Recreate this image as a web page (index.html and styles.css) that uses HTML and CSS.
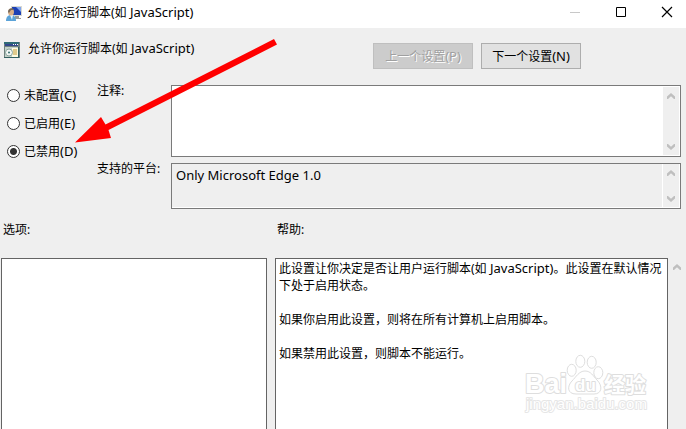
FILE: index.html
```html
<!DOCTYPE html>
<html lang="zh-CN">
<head>
<meta charset="utf-8">
<title>允许你运行脚本(如 JavaScript)</title>
<link rel="stylesheet" href="styles.css">
</head>
<body>
<svg class="symbols" aria-hidden="true">
  <symbol id="chevron-up" viewBox="0 0 8 6"><path d="M0 3.500 4 0 8 3.500V6H7L4 3.200 1 6H0z"/></symbol>
  <symbol id="chevron-down" viewBox="0 0 8 6"><path d="M0 0H1L4 2.800 7 0H8V2.500L4 6 0 2.500z"/></symbol>
</svg>
<div class="window">
  <header class="titlebar">
    <svg class="app-icon" viewBox="0 0 16 16" aria-hidden="true">
      <path d="M5 0h11v10H6z" fill="#d9d9d2"/>
      <path d="M6 1h9v8H6z" fill="#1c3fb4"/>
      <path d="M10 1h5v5z" fill="#7fa4ee"/>
      <path d="M9 10h4v2h2v1H8v-1h1z" fill="#9a9c98"/>
      <path d="M0 15c0-4 2-6 5-6s5 2 5 6z" fill="#5ba3d8"/>
      <path d="M4 9h3l-1 5z" fill="#e8f4fc"/>
      <ellipse cx="5" cy="6" rx="3" ry="3.500" fill="#d9ae86"/>
      <path d="M2 6c0-4 5-5 6-2L5 4 3 7z" fill="#75695b"/>
    </svg>
    <h1 class="title">允许你运行脚本(如<span class="latin"> JavaScript)</span></h1>
    <div class="caption-buttons">
      <button class="caption" aria-label="最小化" disabled><svg viewBox="0 0 12 12"><path d="M1 6.500h10" stroke="#c8c8c8"/></svg></button>
      <button class="caption" aria-label="最大化"><svg viewBox="0 0 12 12"><path d="M1.500 1.500h9v9h-9z" stroke="#000"/></svg></button>
      <button class="caption" aria-label="关闭"><svg viewBox="0 0 12 12"><path d="M1 1l10 10M11 1 1 11" stroke="#000" stroke-width="1.200"/></svg></button>
    </div>
  </header>

  <div class="policy">
    <svg class="policy-icon" viewBox="0 0 16 16" aria-hidden="true">
      <path d="M0 0h16v16H0z" fill="#6f817e"/>
      <path d="M0 0h15v2H0z" fill="#2f6a75"/>
      <path d="M1 2h13v2H1z" fill="#33478c"/>
      <path d="M9 2h1v1H9zM11 2h1v1h-1zM13 2h1v1h-1z" fill="#fff"/>
      <path d="M1 5h14v10H1z" fill="#c5d2ca"/>
      <path d="M8 6h6v9H8z" fill="#fffbe0"/>
      <path d="M9 8h4M9 10h4M9 12h4" stroke="#c29a36"/>
      <circle cx="5" cy="10.500" r="3.500" fill="#f3f7f5" stroke="#8aa49c"/>
      <circle cx="5" cy="10.500" r="1" fill="#356b6c"/>
      <path d="M14 5h1v11h-1zM0 15h15v1H0z" fill="#335f60"/>
    </svg>
    <h2 class="policy-name">允许你运行脚本(如<span class="latin"> JavaScript)</span></h2>
    <div class="nav">
      <button class="push" disabled>上一个设置<span class="latin">(P)</span></button>
      <button class="push">下一个设置<span class="latin">(N)</span></button>
    </div>
  </div>

  <div class="settings">
    <fieldset class="state" aria-label="状态">
      <label class="choice"><input type="radio" name="state"><span>未配置<span class="latin">(C)</span></span></label>
      <label class="choice"><input type="radio" name="state"><span>已启用<span class="latin">(E)</span></span></label>
      <label class="choice"><input type="radio" name="state" checked><span>已禁用<span class="latin">(D)</span></span></label>
    </fieldset>
    <div class="fields">
      <label for="comment">注释:</label>
      <div class="box comment">
        <textarea id="comment"></textarea>
        <div class="scroll"><svg><use href="#chevron-up"/></svg><svg><use href="#chevron-down"/></svg></div>
      </div>
      <label for="platform">支持的平台:</label>
      <div class="box platform">
        <textarea id="platform" class="latin" readonly>Only Microsoft Edge 1.0</textarea>
        <div class="scroll"><svg><use href="#chevron-up"/></svg><svg><use href="#chevron-down"/></svg></div>
      </div>
    </div>
  </div>

  <div class="panes">
    <section class="pane">
      <h3>选项:</h3>
      <div class="panel"></div>
    </section>
    <section class="pane">
      <h3>帮助:</h3>
      <div class="panel help">
        <p>此设置让你决定是否让用户运行脚本(如<span class="latin"> JavaScript)</span>。此设置在默认情况下处于启用状态。</p>
        <p>如果你启用此设置，则将在所有计算机上启用脚本。</p>
        <p>如果禁用此设置，则脚本不能运行。</p>
      </div>
    </section>
    <div class="pane-scroll"><svg><use href="#chevron-up"/></svg></div>
  </div>

  <svg class="arrow" viewBox="0 0 202 106" aria-hidden="true">
    <path d="M0 103.500 26 78 30.500 85.500 199 0 202 5.500 33.500 91 36 99z" fill="#f00"/>
  </svg>

  <svg class="watermark" viewBox="0 0 130 64" role="img" aria-label="Baidu 经验">
    <g class="watermark-text">
      <text x="3" y="40" font-size="27">Bai</text>
      <text x="82" y="39" font-size="21">经验</text>
      <text class="address" x="4" y="56" font-size="15">jingyan.baidu.com</text>
    </g>
    <g fill="#fff" stroke="#dedede">
      <ellipse cx="49.700" cy="17.300" rx="4.500" ry="6"/>
      <ellipse cx="58.300" cy="8.300" rx="4.500" ry="6"/>
      <ellipse cx="69.700" cy="9.300" rx="4.500" ry="6"/>
      <ellipse cx="76.300" cy="19.700" rx="4.500" ry="6"/>
      <path d="M63 18c6 0 8 5 12 9 6 6 5 14-3 14H54c-9 0-9-8-4-13 4-4 7-10 13-10z"/>
    </g>
    <text class="watermark-text" x="53" y="38" font-size="17">du</text>
  </svg>
</div>
</body>
</html>
```

FILE: styles.css
```css
* { box-sizing: border-box; }

body {
  margin: 0;
  background: #efefef;
  color: #000;
  font: 12px/17px "Noto Sans", "Noto Sans CJK SC", sans-serif;
}

h1, h2, h3, p {
  margin: 0;
  font-size: 12px;
  font-weight: 400;
}

button, textarea { font: inherit; color: inherit; }

.latin { font-size: 13px; line-height: 16px; }

.symbols { position: absolute; width: 0; height: 0; }

.window {
  position: relative;
  display: flex;
  flex-direction: column;
  height: 100vh;
  overflow: hidden;
}

.titlebar {
  display: flex;
  align-items: center;
  flex: none;
  height: 28px;
  padding-left: 6px;
  background: #fff;
}

.app-icon { width: 16px; height: 16px; }

.title { margin-left: 5px; padding-bottom: 3px; }

.caption-buttons { display: flex; align-self: start; margin: 0 -4px 0 auto; }

.caption {
  width: 46px;
  height: 24px;
  padding: 0;
  border: 0;
  background: none;
}

.caption svg {
  display: block;
  width: 12px;
  height: 12px;
  margin: 0 auto;
  fill: none;
}

.policy {
  display: flex;
  flex: none;
  height: 53px;
  padding: 12px 105px 0 4px;
}

.policy-icon { width: 16px; height: 16px; margin-top: 2px; }

.policy-name { margin-left: 8px; }

.nav { display: flex; gap: 8px; margin: 3px 0 0 auto; }

.push {
  width: 100px;
  height: 26px;
  padding: 0;
  border: 1px solid #adadad;
  background: #e1e1e1;
}

.push:disabled {
  border-color: #bfbfbf;
  background: #ccc;
  color: #a0a0a0;
  text-shadow: 1px 1px #fff;
}

.settings { display: flex; flex: none; padding-right: 5px; }

.state {
  flex: none;
  width: 97px;
  margin: 0;
  padding: 0 0 0 7px;
  border: 0;
}

.choice { display: flex; align-items: center; gap: 4px; height: 28px; }

.choice input {
  appearance: none;
  width: 13px;
  height: 13px;
  margin: 0;
  border: 1px solid #333;
  border-radius: 50%;
  background: #fff;
}

.choice input:checked {
  background: radial-gradient(circle, #333 3px, #fff 4px);
}

.fields {
  display: grid;
  grid-template-columns: 66px 1fr;
  column-gap: 8px;
  row-gap: 6px;
  flex: 1;
  padding-top: 4px;
}

.fields label { margin-top: -3px; }

.box {
  display: flex;
  padding: 1px;
  border: 1px solid #7a7a7a;
  background: #fff;
}

.comment { height: 72px; }

.platform { height: 46px; padding: 0 1px 1px 0; }

.box textarea {
  flex: 1;
  min-width: 0;
  margin: 0;
  padding: 3px 4px;
  border: 0;
  resize: none;
  overflow: hidden;
  background: #fff;
}

.box.platform textarea { margin-right: 1px; background: #efefef; }

.scroll {
  display: flex;
  flex-direction: column;
  justify-content: space-between;
  align-items: center;
  width: 16px;
  padding: 6px 0 5px;
  background: #efefef;
}

.scroll svg, .pane-scroll svg { width: 8px; height: 6px; fill: #bfbfbf; }

.panes {
  display: grid;
  grid-template-columns: 266fr 401fr 18px;
  grid-template-rows: 1fr;
  flex: 1;
  min-height: 0;
  padding: 12px 0 0 1px;
}

.pane { display: flex; flex-direction: column; min-width: 0; }

.pane + .pane { margin-left: 8px; }

.pane h3 { height: 37px; padding-left: 2px; }

.panel {
  flex: 1;
  min-height: 0;
  border: 1px solid #646464;
  border-bottom: 0;
  background: #fff;
}

.help { padding: 1px 3px; }

.help p + p { margin-top: 17px; }

.pane-scroll { padding: 43px 0 0 5px; line-height: 0; }

.arrow {
  position: absolute;
  left: 75px;
  top: 39px;
  width: 202px;
  height: 106px;
  pointer-events: none;
}

.watermark {
  position: absolute;
  right: 34px;
  bottom: 12px;
  width: 130px;
  height: 64px;
  pointer-events: none;
}

.watermark-text {
  font-family: "Liberation Sans", "Noto Sans CJK SC", sans-serif;
  font-weight: 700;
  fill: #fff;
  stroke: #dedede;
  stroke-width: 2px;
  stroke-linejoin: round;
  paint-order: stroke;
}

.address { font-weight: 400; stroke: #e6e6e6; }
```
